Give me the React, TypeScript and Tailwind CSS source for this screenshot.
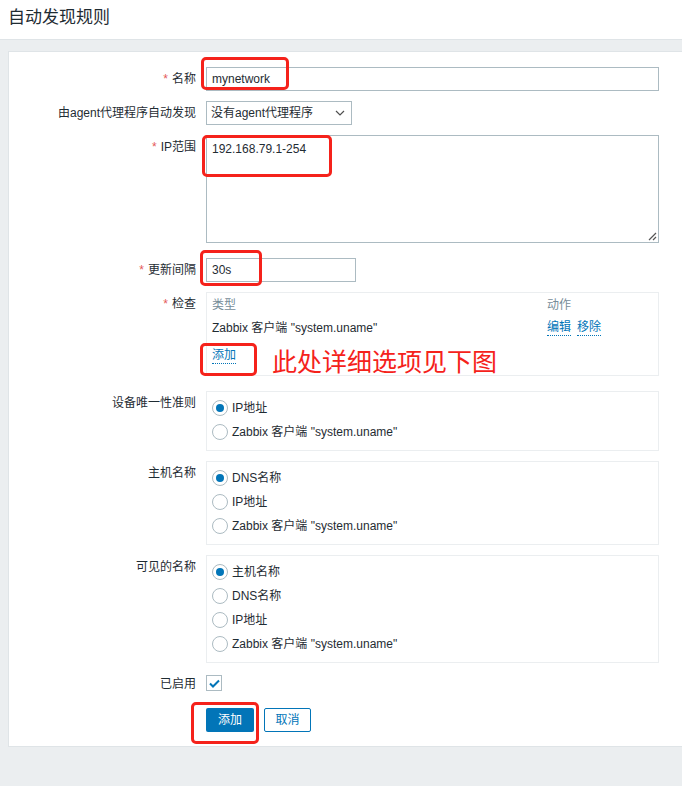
import React from "react";

const FONT = '"Liberation Sans", Arial, "Noto Sans CJK SC", sans-serif';

function Label({ text, req }: { text: string; req?: boolean }) {
  return (
    <div className="text-right pt-[4px] leading-[16px] text-[12px] text-[#1f2c33]">
      {req && <span className="text-[#e45959] mr-[4px]">*</span>}
      {text}
    </div>
  );
}

function Radio({ checked, label }: { checked?: boolean; label: string }) {
  return (
    <div className="flex items-center h-[24px]">
      <span className="w-[16px] h-[16px] rounded-full border border-[#acbbc2] bg-white flex items-center justify-center">
        {checked && <span className="w-[8px] h-[8px] rounded-full bg-[#0275b8]" />}
      </span>
      <span className="ml-[4px] text-[12px] text-[#1f2c33] leading-[16px]">{label}</span>
    </div>
  );
}

function RadioBox({ items }: { items: { label: string; checked?: boolean }[] }) {
  return (
    <div className="border border-[#ebeef0] pt-[4px] pb-[6px] px-[5px]">
      {items.map((it, i) => (
        <Radio key={i} label={it.label} checked={it.checked} />
      ))}
    </div>
  );
}

function Link({ children }: { children: React.ReactNode }) {
  return (
    <span className="text-[#0275b8] border-b border-dotted border-[#0275b8] leading-[15px] inline-block">
      {children}
    </span>
  );
}

function RedBox({ l, t, w, h }: { l: number; t: number; w: number; h: number }) {
  return (
    <div
      className="absolute border-[3px] border-[#f5221b] rounded-[5px] pointer-events-none"
      style={{ left: l, top: t, width: w, height: h }}
    />
  );
}

export default function App() {
  const row = "grid grid-cols-[187px_453px] gap-x-[10px]";
  return (
    <div className="relative min-h-[786px] bg-[#ebeef0]" style={{ fontFamily: FONT }}>
      <div className="h-[40px] bg-white border-b border-[#dfe4e7] px-[8px] pt-[6px]">
        <h1 className="text-[17px] leading-[24px] text-[#1f2c33] font-normal">自动发现规则</h1>
      </div>
      <div className="ml-[8px] mt-[11px] bg-white border border-r-0 border-[#dfe4e7] pt-[15px] pb-[14px] text-[12px] text-[#1f2c33]">
        {/* 名称 */}
        <div className={row}>
          <Label text="名称" req />
          <div className="h-[24px] border border-[#acbbc2] px-[5px] flex items-center">mynetwork</div>
        </div>
        {/* agent */}
        <div className={row + " mt-[10px]"}>
          <Label text="由agent代理程序自动发现" />
          <div className="w-[146px] h-[24px] border border-[#acbbc2] pl-[4px] pr-[6px] flex items-center justify-between">
            <span>没有agent代理程序</span>
            <svg width="10" height="6" viewBox="0 0 10 6">
              <path d="M1 1 L5 5 L9 1" fill="none" stroke="#4f4f4f" strokeWidth="1.2" />
            </svg>
          </div>
        </div>
        {/* IP范围 */}
        <div className={row + " mt-[10px]"}>
          <Label text="IP范围" req />
          <div className="relative h-[108px] border border-[#acbbc2] px-[5px] pt-[5px] leading-[16px]">
            192.168.79.1-254
            <svg className="absolute right-[1px] bottom-[1px]" width="10" height="10" viewBox="0 0 10 10">
              <path d="M9 2 L2 9 M9 6 L6 9" fill="none" stroke="#555" strokeWidth="1.2" />
            </svg>
          </div>
        </div>
        {/* 更新间隔 */}
        <div className={row + " mt-[15px]"}>
          <Label text="更新间隔" req />
          <div className="w-[150px] h-[24px] border border-[#acbbc2] px-[5px] flex items-center">30s</div>
        </div>
        {/* 检查 */}
        <div className={row + " mt-[10px]"}>
          <Label text="检查" req />
          <div className="h-[84px] border border-[#ebeef0] px-[5px] pt-[4px] leading-[16px]">
            <div className="grid grid-cols-[335px_1fr] text-[#768d99]">
              <span>类型</span>
              <span>动作</span>
            </div>
            <div className="grid grid-cols-[335px_1fr] mt-[7px]">
              <span>Zabbix 客户端 "system.uname"</span>
              <span className="flex gap-[6px]">
                <Link>编辑</Link>
                <Link>移除</Link>
              </span>
            </div>
            <div className="mt-[11px]">
              <Link>添加</Link>
            </div>
          </div>
        </div>
        {/* 设备唯一性准则 */}
        <div className={row + " mt-[15px]"}>
          <Label text="设备唯一性准则" />
          <RadioBox items={[{ label: "IP地址", checked: true }, { label: 'Zabbix 客户端 "system.uname"' }]} />
        </div>
        {/* 主机名称 */}
        <div className={row + " mt-[10px]"}>
          <Label text="主机名称" />
          <RadioBox
            items={[
              { label: "DNS名称", checked: true },
              { label: "IP地址" },
              { label: 'Zabbix 客户端 "system.uname"' },
            ]}
          />
        </div>
        {/* 可见的名称 */}
        <div className={row + " mt-[10px]"}>
          <Label text="可见的名称" />
          <RadioBox
            items={[
              { label: "主机名称", checked: true },
              { label: "DNS名称" },
              { label: "IP地址" },
              { label: 'Zabbix 客户端 "system.uname"' },
            ]}
          />
        </div>
        {/* 已启用 */}
        <div className={row + " mt-[12px]"}>
          <div className="text-right leading-[16px] pt-[1px]">已启用</div>
          <div className="w-[16px] h-[16px] border border-[#acbbc2] flex items-center justify-center">
            <svg width="11" height="9" viewBox="0 0 11 9">
              <path d="M1 4.5 L4 7.5 L10 1.5" fill="none" stroke="#0275b8" strokeWidth="2" />
            </svg>
          </div>
        </div>
        {/* buttons */}
        <div className={row + " mt-[16px]"}>
          <div />
          <div className="flex gap-[10px]">
            <button className="h-[24px] w-[48px] bg-[#0275b8] text-white rounded-[2px] text-[12px]">添加</button>
            <button className="h-[24px] w-[47px] bg-white border border-[#0275b8] text-[#0275b8] rounded-[2px] text-[12px]">
              取消
            </button>
          </div>
        </div>
      </div>

      {/* red annotations */}
      <RedBox l={201} t={57} w={88} h={33} />
      <RedBox l={202} t={135} w={130} h={42} />
      <RedBox l={200} t={250} w={62} h={36} />
      <RedBox l={200} t={343} w={57} h={33} />
      <RedBox l={191} t={702} w={68} h={42} />
      <div className="absolute left-[272px] top-[349px] text-[25px] leading-[26px] text-[#f5221b] whitespace-nowrap">
        此处详细选项见下图
      </div>
    </div>
  );
}
